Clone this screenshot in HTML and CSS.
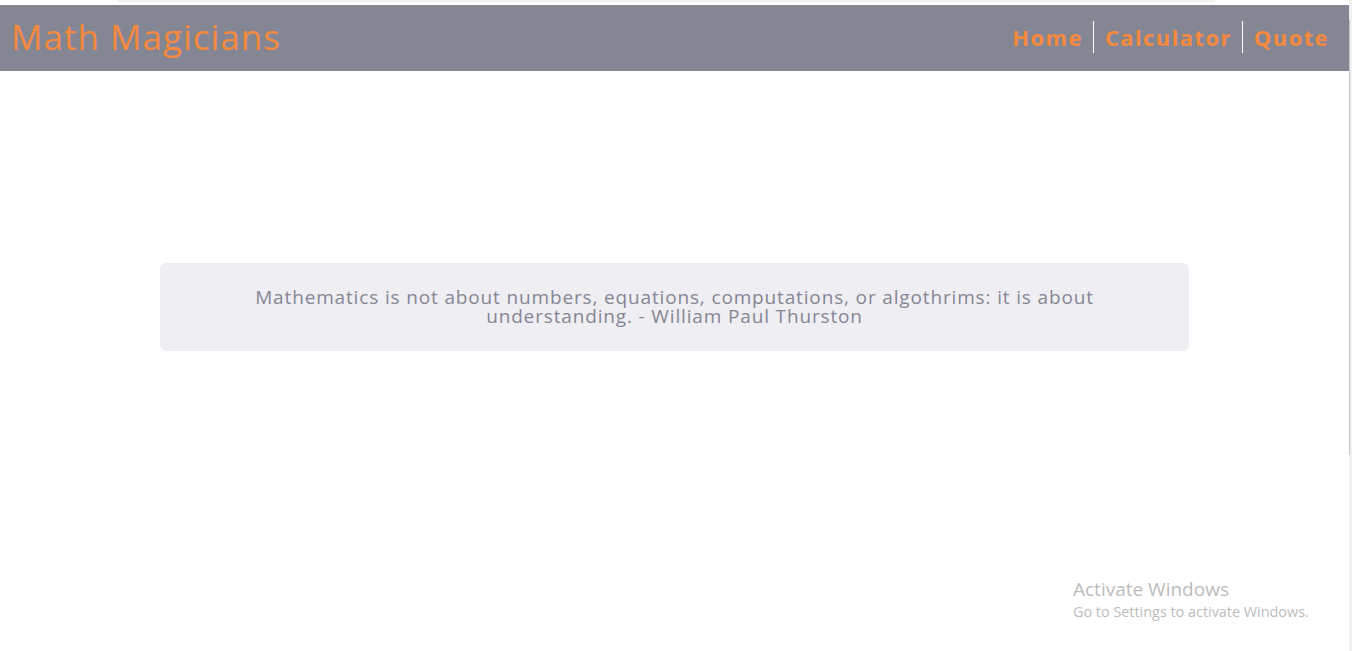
FILE: index.html
```html
<!DOCTYPE html>
<html lang="en">
<head>
<meta charset="utf-8">
<title>Math Magicians</title>
<link rel="stylesheet" href="styles.css">
</head>
<body>
<div class="page">
  <div class="content">
    <div class="topstrip"><div class="topline"></div></div>
    <header class="header">
      <h1 class="brand">Math Magicians</h1>
      <nav class="nav">
        <a class="nav-link" href="#">Home</a>
        <a class="nav-link" href="#">Calculator</a>
        <a class="nav-link" href="#">Quote</a>
      </nav>
    </header>
    <main class="main">
      <div class="quote">
        <p class="quote-text">Mathematics is not about numbers, equations, computations, or algothrims: it is about understanding. - William Paul Thurston</p>
      </div>
    </main>
    <div class="activate">
      <div class="activate-title">Activate Windows</div>
      <div class="activate-sub">Go to Settings to activate Windows.</div>
    </div>
  </div>
  <div class="scrollbar"><div class="thumb"></div></div>
</div>
</body>
</html>
```

FILE: styles.css
```css
html, body {
  margin: 0;
  padding: 0;
  height: 100%;
  background: #ffffff;
}

body {
  font-family: "Open Sans", "Noto Sans", sans-serif;
  overflow: hidden;
}

.page {
  display: flex;
  height: 651px;
}

.content {
  flex: 1;
  display: flex;
  flex-direction: column;
  position: relative;
}

.topstrip {
  height: 5px;
  padding: 0 134px 0 118px;
  background: #ffffff;
}

.topline {
  height: 2px;
  background: #f1f1f1;
}

.header {
  height: 66px;
  box-sizing: border-box;
  padding: 0 10px 2px 11px;
  background: #858693;
  display: flex;
  align-items: center;
  justify-content: space-between;
}

.brand {
  margin: 0;
  font-size: 35px;
  font-weight: 400;
  color: #f6893e;
  letter-spacing: 1px;
  line-height: 40px;
}

.nav {
  display: flex;
  align-items: center;
}

.nav-link {
  color: #f6893e;
  font-size: 22px;
  font-weight: 700;
  text-decoration: none;
  padding: 0 10px 0 11px;
  line-height: 32px;
  letter-spacing: 1.4px;
  border-left: 1px solid #ffffff;
}

.nav-link:first-child {
  border-left: none;
}

.main {
  flex: 1;
  padding: 192px 160px 0 160px;
}

.quote {
  background: #efeef3;
  border-radius: 6px;
  height: 88px;
  display: flex;
  align-items: center;
  justify-content: center;
  padding: 0 70px;
}

.quote-text {
  margin: 0;
  text-align: center;
  color: #858693;
  font-size: 19px;
  line-height: 19px;
  letter-spacing: 0.85px;
}

.activate {
  position: absolute;
  left: 1073px;
  top: 577px;
  color: #bcbcbc;
  font-family: "Open Sans", "Noto Sans", sans-serif;
}

.activate-title {
  font-size: 19px;
  line-height: 25px;
}

.activate-sub {
  font-size: 14.4px;
  line-height: 20px;
}

.scrollbar {
  width: 3px;
  background: #f0f0f0;
  padding-top: 20px;
}

.thumb {
  width: 1px;
  height: 435px;
  background: #c2c2c2;
}
```
